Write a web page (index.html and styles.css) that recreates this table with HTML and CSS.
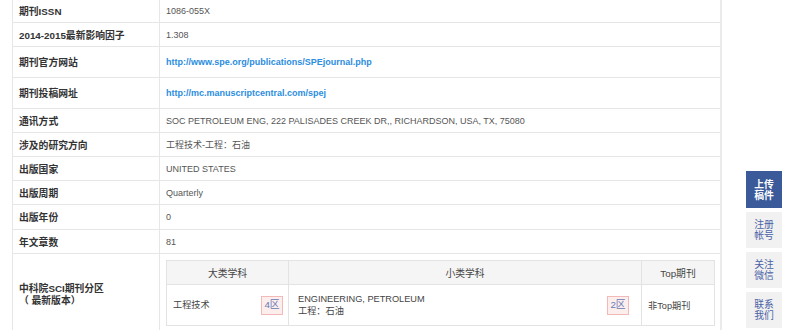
FILE: index.html
```html
<!DOCTYPE html>
<html lang="zh-CN">
<head>
<meta charset="utf-8">
<title>期刊信息</title>
<link rel="stylesheet" href="styles.css">
</head>
<body>
<div class="page">
  <div class="main">
    <table class="info">
      <colgroup><col class="c-label"><col class="c-value"></colgroup>
      <tr class="r24"><th>期刊ISSN</th><td>1086-055X</td></tr>
      <tr class="r24"><th>2014-2015最新影响因子</th><td>1.308</td></tr>
      <tr class="r31"><th>期刊官方网站</th><td><a class="lnk" href="#">http://www.spe.org/publications/SPEjournal.php</a></td></tr>
      <tr class="r31"><th>期刊投稿网址</th><td><a class="lnk" href="#">http://mc.manuscriptcentral.com/spej</a></td></tr>
      <tr class="r24"><th>通讯方式</th><td>SOC PETROLEUM ENG, 222 PALISADES CREEK DR,, RICHARDSON, USA, TX, 75080</td></tr>
      <tr class="r24"><th>涉及的研究方向</th><td>工程技术-工程：石油</td></tr>
      <tr class="r24"><th>出版国家</th><td>UNITED STATES</td></tr>
      <tr class="r24"><th>出版周期</th><td>Quarterly</td></tr>
      <tr class="r25"><th>出版年份</th><td>0</td></tr>
      <tr class="r24"><th>年文章数</th><td>81</td></tr>
      <tr class="rlast">
        <th>中科院SCI期刊分区<br>（ 最新版本）</th>
        <td class="nest-cell">
          <table class="zone">
            <colgroup><col class="z1"><col class="z2"><col class="z3"></colgroup>
            <tr class="zhead"><th>大类学科</th><th>小类学科</th><th>Top期刊</th></tr>
            <tr class="zbody">
              <td><div class="zc"><span>工程技术</span><span class="badge">4区</span></div></td>
              <td><div class="zc"><span>ENGINEERING, PETROLEUM<br>工程：石油</span><span class="badge">2区</span></div></td>
              <td class="ztop">非Top期刊</td>
            </tr>
          </table>
        </td>
      </tr>
    </table>
  </div>
  <aside class="side">
    <a class="sbtn on" href="#">上传<br>稿件</a>
    <a class="sbtn" href="#">注册<br>帐号</a>
    <a class="sbtn" href="#">关注<br>微信</a>
    <a class="sbtn" href="#">联系<br>我们</a>
  </aside>
</div>
</body>
</html>
```
FILE: styles.css
```css
html, body {
  margin: 0;
  padding: 0;
  background: #fff;
}
body {
  font-family: Arial, "Liberation Sans", "Noto Sans CJK SC", sans-serif;
  overflow: hidden;
  height: 330px;
}
.page {
  display: flex;
  width: 800px;
}
.main {
  width: 710px;
  padding-left: 12px;
  flex: none;
}
.info {
  width: 710px;
  margin-top: -2px;
  border-collapse: collapse;
  table-layout: fixed;
  border-left: 1px solid #e6e6e6;
  border-right: 2px solid #ebebeb;
}
.c-label { width: 147px; }
.info > tbody > tr > th,
.info > tbody > tr > td {
  border-top: 1px solid #e6e6e6;
  border-bottom: 1px solid #e6e6e6;
  padding: 0 6px;
  vertical-align: middle;
  text-align: left;
}
.info > tbody > tr > th {
  border-right: 1px solid #e6e6e6;
  font-weight: bold;
  font-size: 9.8px;
  color: #333;
}
.info > tbody > tr > td {
  font-size: 9px;
  color: #555;
}
.r24 { height: 24px; }
.r25 { height: 25px; }
.r31 { height: 31px; }
.rlast { height: 82px; }
.info > tbody > tr.rlast > th {
  line-height: 12px;
}
.lnk {
  color: #2b8de0;
  font-weight: bold;
  text-decoration: none;
}
.info > tbody > tr > td.nest-cell {
  padding: 6px 6px 9px 6px;
  vertical-align: top;
}
.zone {
  width: 549px;
  border-collapse: collapse;
  table-layout: fixed;
  border: 1px solid #e3e3e3;
}
.z1 { width: 122px; }
.z3 { width: 73px; }
.zone th, .zone td {
  border: 1px solid #e3e3e3;
}
.zhead { height: 24px; }
.zhead th {
  background: #f5f5f5;
  font-weight: normal;
  font-size: 9.8px;
  color: #444;
  text-align: center;
}
.zbody { height: 41px; }
.zbody td {
  font-size: 9.2px;
  color: #444;
  padding: 0 5px 0 6px;
}
.zbody td:nth-child(2) { padding-left: 9px; padding-right: 12px; }
.zc {
  display: flex;
  align-items: center;
  justify-content: space-between;
  line-height: 12px;
}
.badge {
  display: inline-flex;
  align-items: center;
  justify-content: center;
  width: 20px;
  height: 17px;
  border: 1px solid #f3b9b9;
  background: #fdeeee;
  color: #6779b4;
  font-size: 9.8px;
}
.ztop {
  color: #444;
}
.side {
  flex: none;
  display: flex;
  flex-direction: column;
  gap: 4px;
  padding-top: 171px;
  padding-left: 24px;
}
.sbtn {
  display: flex;
  align-items: center;
  justify-content: center;
  width: 36px;
  height: 36px;
  background: #f1f1f1;
  color: #4a62a6;
  font-size: 9.8px;
  line-height: 11px;
  text-align: center;
  text-decoration: none;
}
.sbtn.on {
  background: #3b5a9a;
  color: #fff;
  font-weight: bold;
  height: 37px;
}
```
